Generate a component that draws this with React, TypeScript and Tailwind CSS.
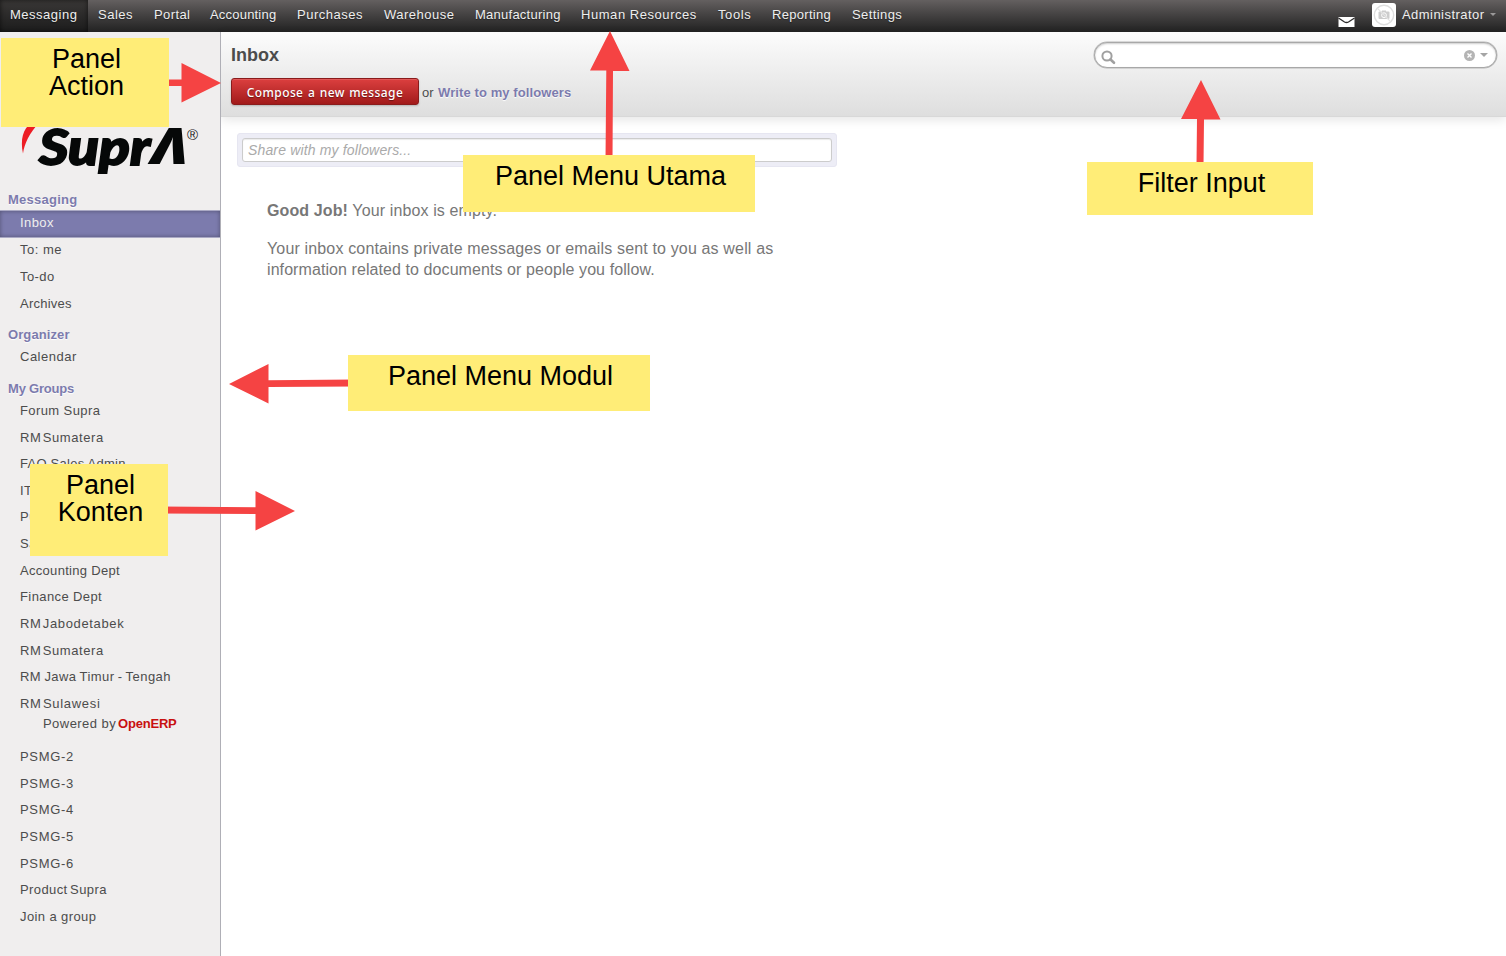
import React from "react";

const navItems = [
  { label: "Messaging", box: "w-[88px] bg-gradient-to-b from-[#3a3837] to-[#1c1c1c] shadow-[inset_0_0_5px_rgba(0,0,0,0.6)]", t: "tracking-[0.5px]" },
  { label: "Sales", box: "w-[56px]", t: "tracking-[0.5px]" },
  { label: "Portal", box: "w-[56px]", t: "tracking-[0.4px]" },
  { label: "Accounting", box: "w-[87px]", t: "tracking-[0.2px]" },
  { label: "Purchases", box: "w-[87px]", t: "tracking-[0.5px]" },
  { label: "Warehouse", box: "w-[91px]", t: "tracking-[0.5px]" },
  { label: "Manufacturing", box: "w-[106px]", t: "tracking-[0.25px]" },
  { label: "Human Resources", box: "w-[137px]", t: "tracking-[0.55px]" },
  { label: "Tools", box: "w-[54px]", t: "tracking-[0.6px]" },
  { label: "Reporting", box: "w-[80px]", t: "tracking-[0.3px]" },
  { label: "Settings", box: "w-[70px]", t: "tracking-[0.4px]" },
];

const groups = [
  { label: "Forum Supra", t: "tracking-[0.4px]" },
  { label: "RM Sumatera", t: "tracking-[0.6px] [word-spacing:-3px]" },
  { label: "FAQ Sales Admin", t: "tracking-[0.25px]" },
  { label: "IT", t: "tracking-[0.5px]" },
  { label: "Purch", t: "tracking-[0.5px]" },
  { label: "Sales", t: "tracking-[0.5px]" },
  { label: "Accounting Dept", t: "tracking-[0.3px]" },
  { label: "Finance Dept", t: "tracking-[0.4px]" },
  { label: "RM Jabodetabek", t: "tracking-[0.65px] [word-spacing:-3px]" },
  { label: "RM Sumatera", t: "tracking-[0.6px] [word-spacing:-3px]" },
  { label: "RM Jawa Timur - Tengah", t: "tracking-[0.45px] [word-spacing:-0.8px]" },
  { label: "RM Sulawesi", t: "tracking-[0.7px] [word-spacing:-3px]" },
  { label: "", t: "" },
  { label: "PSMG-2", t: "tracking-[0.7px]" },
  { label: "PSMG-3", t: "tracking-[0.7px]" },
  { label: "PSMG-4", t: "tracking-[0.7px]" },
  { label: "PSMG-5", t: "tracking-[0.7px]" },
  { label: "PSMG-6", t: "tracking-[0.7px]" },
  { label: "Product Supra", t: "tracking-[0.4px] [word-spacing:-1.500px]" },
  { label: "Join a group", t: "tracking-[0.4px]" },
];

function TopBar() {
  return (
    <header className="flex h-8 shrink-0 justify-between bg-gradient-to-b from-[#646060] to-[#222222] text-[13px] text-[#eeeeee]">
      <nav className="flex">
        {navItems.map((n) => (
          <a key={n.label} className={`flex h-8 items-center whitespace-nowrap pb-[3px] pl-[10px] [text-shadow:0_1px_1px_rgba(0,0,0,0.4)] ${n.box} ${n.t}`}>
            {n.label}
          </a>
        ))}
      </nav>
      <div className="flex">
        <svg className="mr-[17px] mt-[16px] h-[12px] w-[17px]" viewBox="0 0 17 12">
          <rect x="0.5" y="1" width="16" height="10" fill="#fff" />
          <path d="M0.5 2 L6.5 6 Q8.5 7 10.5 6 L16.500 2" fill="none" stroke="#2c2b2b" strokeWidth="1.3" />
        </svg>
        <div className="mt-[3px] flex size-6 items-center justify-center rounded-[3px] bg-white">
          <svg width="22" height="22" viewBox="0 0 22 22" fill="none">
            <circle cx="11" cy="11" r="9.7" stroke="#dedede" strokeWidth="1.4" />
            <rect x="5.5" y="7.5" width="11" height="7.5" rx="1" fill="#cdcdcd" />
            <rect x="9" y="6.5" width="4" height="2" fill="#cdcdcd" />
            <circle cx="11" cy="11.2" r="2.4" stroke="#fff" strokeWidth="1" />
            <path d="M4.2 4.2 L17.8 17.8" stroke="#e4e4e4" strokeWidth="1.2" />
          </svg>
        </div>
        <span className="ml-[6px] flex h-8 w-[88px] items-center whitespace-nowrap pb-[3px] tracking-[0.45px]">Administrator</span>
        <span className="mr-[10px] mt-[13px] h-0 w-[6px] border-x-[3px] border-t-[3px] border-x-transparent border-t-[#9b9999]" />
      </div>
    </header>
  );
}

function SectionTitle({ children, className }: { children: React.ReactNode; className: string }) {
  return <h2 className={`pl-2 text-[13px] font-bold text-[#7c7bad] [text-shadow:0_1px_1px_white] ${className}`}>{children}</h2>;
}

function Logo() {
  return (
    <div className="relative h-[159px] shrink-0">
      <svg className="absolute left-[20px] top-[88px]" width="22" height="36" viewBox="0 0 22 36">
        <path d="M20 2 C6 0 -1 16 3 33.500 C4.500 24 9 13 20 2 Z" fill="#ed1c24" />
      </svg>
      <span className="absolute left-[39px] top-[84px] origin-left scale-x-[1.16] font-['Lato'] text-[49px] leading-[60px] font-black italic text-[#060808] [-webkit-text-stroke:1.8px_#060808]">Supr</span>
      <span className="absolute left-[151px] top-[83px] origin-left scale-x-[1.2] font-['Open_Sans'] text-[50px] leading-[60px] font-extrabold italic text-[#060808]">Λ</span>
      <span className="absolute left-[187px] top-[94px] text-[15px] leading-[18px] text-[#222]">®</span>
    </div>
  );
}

function Sidebar() {
  return (
    <aside className="relative flex w-[221px] shrink-0 flex-col border-r border-[#afafb6] bg-[#f0eeee] text-[13px] text-[#4c4c4c]">
      <Logo />
      <SectionTitle className="h-[19px] leading-[18px] tracking-[0.25px]">Messaging</SectionTitle>
      <div className="flex h-[28px] items-center border-y border-[#aaa9c4] bg-[#7c7bad] pb-[2px] pl-5 tracking-[0.4px] text-[#eeeeee] shadow-[inset_0_0_4px_rgba(0,0,0,0.35)]">Inbox</div>
      <div className="flex h-[27px] items-center pb-1 pl-5 tracking-[0.5px]">To: me</div>
      <div className="flex h-[27px] items-center pb-1 pl-5 tracking-[0.4px]">To-do</div>
      <div className="flex h-[27px] items-center pb-1 pl-5 tracking-[0.25px]">Archives</div>
      <SectionTitle className="mt-[7px] h-[18px] leading-[18px] tracking-[0.1px]">Organizer</SectionTitle>
      <div className="flex h-[26px] items-center pl-5 tracking-[0.5px]">Calendar</div>
      <SectionTitle className="mt-[10px] h-[18px] leading-[18px] tracking-[-0.2px]">My Groups</SectionTitle>
      <div className="-mt-[0.7px] flex flex-col">
        {groups.map((g, i) => (
          <div key={i} className={`flex h-[26.65px] shrink-0 items-center whitespace-nowrap pl-5 ${g.t}`}>{g.label}</div>
        ))}
      </div>
      <div className="absolute left-[43px] top-[683px] flex whitespace-nowrap leading-[18px]">
        <span className="w-[75px] tracking-[0.45px]">Powered by</span>
        <b className="tracking-[-0.2px] text-[#c81010]">OpenERP</b>
      </div>
    </aside>
  );
}

function ActionBar() {
  return (
    <section className="flex h-[85px] shrink-0 justify-between border-b border-[#d8d8d8] bg-gradient-to-b from-[#fcfcfc] to-[#dedede] pl-[10px] pr-[9px] shadow-[0_3px_10px_rgba(0,0,0,0.1)]">
      <div className="flex flex-col">
        <h1 className="mt-[12px] h-[22px] text-[18px] leading-[22px] font-bold text-[#4c4c4c]">Inbox</h1>
        <div className="mt-[12px] flex items-center text-[13px] text-[#4c4c4c]">
          <button className="h-[27px] w-[188px] whitespace-nowrap rounded-[3px] border border-[#8a1c1c] bg-gradient-to-b from-[#dc3f3f] to-[#a21a1a] pt-[2px] font-['Noto_Sans'] text-[12px] font-medium tracking-[0.4px] text-white shadow-[0_1px_2px_rgba(0,0,0,0.2),inset_0_1px_0_rgba(255,255,255,0.15)] [text-shadow:0_1px_1px_rgba(0,0,0,0.4)] [word-spacing:1px]">
            Compose a new message
          </button>
          <span className="ml-[3px] w-[16px] pt-[2px]">or</span>
          <b className="whitespace-nowrap pt-[2px] tracking-[0.1px] text-[#7c7bad] [text-shadow:0_1px_1px_white]">Write to my followers</b>
        </div>
      </div>
      <div className="mt-[10px] flex h-[26px] w-[403px] items-center justify-between rounded-full border border-[#a8a8a8] bg-white pl-[6px] pr-[8px] shadow-[inset_0_1px_2px_rgba(0,0,0,0.2),0_0_0_0.5px_#b8b8b8]">
        <svg className="mt-[5px]" width="15" height="15" viewBox="0 0 15 15" fill="none" stroke="#a0a0a0">
          <circle cx="6" cy="6" r="4.600" strokeWidth="2" />
          <path d="M9.300 9.300 L13 12.800" strokeWidth="2.600" strokeLinecap="round" />
        </svg>
        <div className="flex items-center gap-[5px]">
          <svg width="11" height="11" viewBox="0 0 11 11">
            <circle cx="5.500" cy="5.500" r="5.500" fill="#b4b4b4" />
            <path d="M3.500 3.500 L7.500 7.500 M7.500 3.500 L3.500 7.500" stroke="#fff" strokeWidth="1.400" />
          </svg>
          <span className="h-0 w-0 border-x-[4px] border-t-[4px] border-x-transparent border-t-[#a5a5a5]" />
        </div>
      </div>
    </section>
  );
}

function Note({ className, children }: { className: string; children: React.ReactNode }) {
  return <div className={`absolute bg-[#ffed77] text-center text-[27px] leading-[27px] whitespace-nowrap text-black ${className}`}>{children}</div>;
}

function Annotations() {
  return (
    <>
      <svg className="absolute left-0 top-0" width="1506" height="956" viewBox="0 0 1506 956" fill="#f54343">
        <path d="M160 79.500 H181.500 V63 L221 83 L181.500 102.500 V86 H160 Z" />
        <path d="M605.500 160 L606.300 70.500 H590 L610 31 L629.500 71 H613 L612.500 160 Z" />
        <path d="M1196.500 165 L1197 119 H1181 L1201 80 L1220.500 119.500 H1204 L1203.500 165 Z" />
        <path d="M355 379.500 L268.500 380.300 V364 L229 384 L268.500 403.500 V387 L355 386.500 Z" />
        <path d="M160 506.500 L255.500 507.300 V491 L295 511 L255.500 530.500 V514 L160 513.500 Z" />
      </svg>
      <Note className="left-[1px] top-[38px] h-[89px] w-[168px] pt-[8px] pl-[3px]">Panel<br />Action</Note>
      <Note className="left-[463px] top-[155px] h-[57px] w-[292px] pt-[8px] pl-[3px]">Panel Menu Utama</Note>
      <Note className="left-[1087px] top-[162px] h-[53px] w-[226px] pt-[8px] pl-[3px]">Filter Input</Note>
      <Note className="left-[348px] top-[355px] h-[56px] w-[302px] pt-[8px] pl-[3px]">Panel Menu Modul</Note>
      <Note className="left-[30px] top-[464px] h-[92px] w-[138px] pt-[8px] pl-[3px]">Panel<br />Konten</Note>
    </>
  );
}

export default function App() {
  return (
    <div className="relative flex h-[956px] w-[1506px] flex-col overflow-hidden bg-white font-['Liberation_Sans',sans-serif]">
      <TopBar />
      <div className="flex min-h-0 flex-1">
        <Sidebar />
        <main className="flex flex-1 flex-col">
          <ActionBar />
          <div className="ml-[16px] mt-[16px] h-[34px] w-[600px] rounded-[3px] border border-[#e6e6f1] bg-[#ededf6] p-1">
            <div className="flex h-[24px] items-center rounded-[3px] border border-[#ccc] bg-white pl-[5px] text-[14px] italic tracking-[0.15px] text-[#aaaaaa] shadow-[inset_0_1px_1px_rgba(0,0,0,0.08)]">
              Share with my followers...
            </div>
          </div>
          <div className="ml-[46px] mt-[33px] text-[16px] leading-[21px] text-[#777777]">
            <p className="tracking-[0.12px]"><b>Good Job!</b> Your inbox is empty.</p>
            <p className="mt-[17px] whitespace-nowrap">
              <span className="tracking-[0.155px]">Your inbox contains private messages or emails sent to you as well as</span>
              <br />
              <span className="tracking-[0.08px]">information related to documents or people you follow.</span>
            </p>
          </div>
        </main>
      </div>
      <Annotations />
    </div>
  );
}
